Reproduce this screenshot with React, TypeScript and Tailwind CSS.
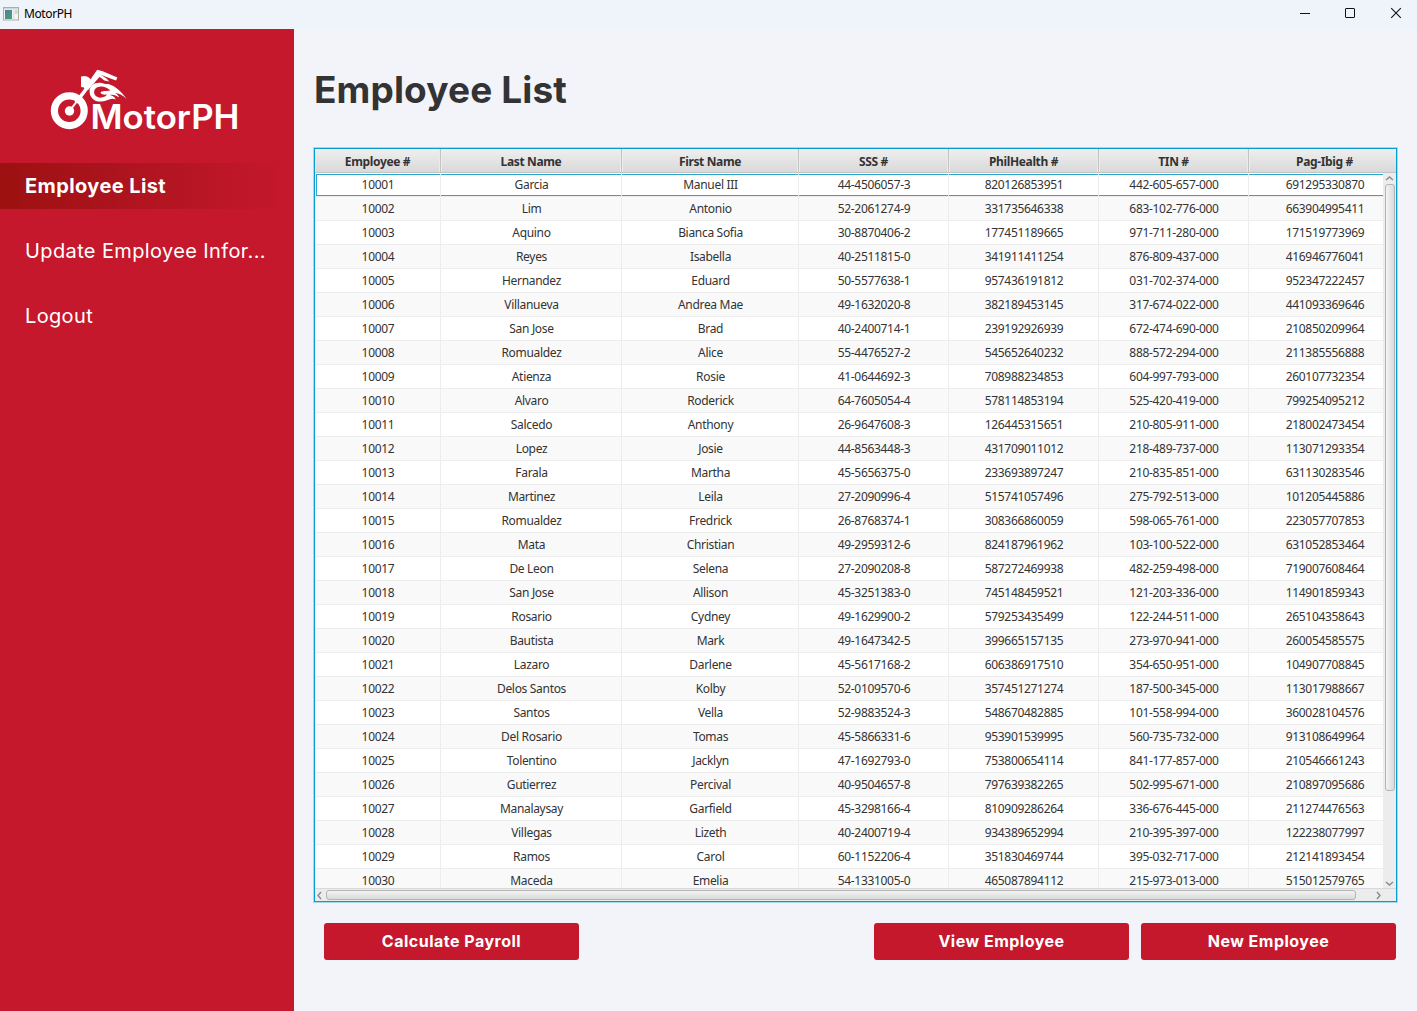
import React from "react";

type Row = [string, string, string, string, string, string, string];

const columns: { label: string; width: string }[] = [
  { label: "Employee #", width: "w-[126px]" },
  { label: "Last Name", width: "w-[181px]" },
  { label: "First Name", width: "w-[177px]" },
  { label: "SSS #", width: "w-[150px]" },
  { label: "PhilHealth #", width: "w-[150px]" },
  { label: "TIN #", width: "w-[150px]" },
  { label: "Pag-Ibig #", width: "w-[152px]" },
];

const rows: Row[] = [
  ["10001", "Garcia", "Manuel III", "44-4506057-3", "820126853951", "442-605-657-000", "691295330870"],
  ["10002", "Lim", "Antonio", "52-2061274-9", "331735646338", "683-102-776-000", "663904995411"],
  ["10003", "Aquino", "Bianca Sofia", "30-8870406-2", "177451189665", "971-711-280-000", "171519773969"],
  ["10004", "Reyes", "Isabella", "40-2511815-0", "341911411254", "876-809-437-000", "416946776041"],
  ["10005", "Hernandez", "Eduard", "50-5577638-1", "957436191812", "031-702-374-000", "952347222457"],
  ["10006", "Villanueva", "Andrea Mae", "49-1632020-8", "382189453145", "317-674-022-000", "441093369646"],
  ["10007", "San Jose", "Brad", "40-2400714-1", "239192926939", "672-474-690-000", "210850209964"],
  ["10008", "Romualdez", "Alice", "55-4476527-2", "545652640232", "888-572-294-000", "211385556888"],
  ["10009", "Atienza", "Rosie", "41-0644692-3", "708988234853", "604-997-793-000", "260107732354"],
  ["10010", "Alvaro", "Roderick", "64-7605054-4", "578114853194", "525-420-419-000", "799254095212"],
  ["10011", "Salcedo", "Anthony", "26-9647608-3", "126445315651", "210-805-911-000", "218002473454"],
  ["10012", "Lopez", "Josie", "44-8563448-3", "431709011012", "218-489-737-000", "113071293354"],
  ["10013", "Farala", "Martha", "45-5656375-0", "233693897247", "210-835-851-000", "631130283546"],
  ["10014", "Martinez", "Leila", "27-2090996-4", "515741057496", "275-792-513-000", "101205445886"],
  ["10015", "Romualdez", "Fredrick", "26-8768374-1", "308366860059", "598-065-761-000", "223057707853"],
  ["10016", "Mata", "Christian", "49-2959312-6", "824187961962", "103-100-522-000", "631052853464"],
  ["10017", "De Leon", "Selena", "27-2090208-8", "587272469938", "482-259-498-000", "719007608464"],
  ["10018", "San Jose", "Allison", "45-3251383-0", "745148459521", "121-203-336-000", "114901859343"],
  ["10019", "Rosario", "Cydney", "49-1629900-2", "579253435499", "122-244-511-000", "265104358643"],
  ["10020", "Bautista", "Mark", "49-1647342-5", "399665157135", "273-970-941-000", "260054585575"],
  ["10021", "Lazaro", "Darlene", "45-5617168-2", "606386917510", "354-650-951-000", "104907708845"],
  ["10022", "Delos Santos", "Kolby", "52-0109570-6", "357451271274", "187-500-345-000", "113017988667"],
  ["10023", "Santos", "Vella", "52-9883524-3", "548670482885", "101-558-994-000", "360028104576"],
  ["10024", "Del Rosario", "Tomas", "45-5866331-6", "953901539995", "560-735-732-000", "913108649964"],
  ["10025", "Tolentino", "Jacklyn", "47-1692793-0", "753800654114", "841-177-857-000", "210546661243"],
  ["10026", "Gutierrez", "Percival", "40-9504657-8", "797639382265", "502-995-671-000", "210897095686"],
  ["10027", "Manalaysay", "Garfield", "45-3298166-4", "810909286264", "336-676-445-000", "211274476563"],
  ["10028", "Villegas", "Lizeth", "40-2400719-4", "934389652994", "210-395-397-000", "122238077997"],
  ["10029", "Ramos", "Carol", "60-1152206-4", "351830469744", "395-032-717-000", "212141893454"],
  ["10030", "Maceda", "Emelia", "54-1331005-0", "465087894112", "215-973-013-000", "515012579765"],
];

function TitleBar() {
  return (
    <header className="flex h-[29px] shrink-0 items-center bg-[#eff3fa] pb-[2px] pl-[3px] text-black">
      <svg width="16" height="14" viewBox="0 0 16 14" className="shrink-0">
        <defs>
          <linearGradient id="pane" x1="0" y1="0" x2="1" y2="1">
            <stop offset="0" stopColor="#4d7fa8" />
            <stop offset="1" stopColor="#46a26b" />
          </linearGradient>
        </defs>
        <rect x="0.5" y="0.5" width="15" height="12.5" fill="#f4f4f4" stroke="#a9adb0" />
        <rect x="1" y="1" width="14" height="1.5" fill="#d3d6d8" />
        <rect x="2" y="3" width="7" height="9" fill="url(#pane)" />
        <rect x="10" y="3" width="1.5" height="9" fill="#dfe3e6" />
        <rect x="12" y="3" width="2.5" height="4" fill="#c0dccb" />
      </svg>
      <span className="ml-[5px] text-[12px] leading-none tracking-[-0.4px]">MotorPH</span>
      <svg width="137" height="27" viewBox="0 0 137 27" className="ml-auto" fill="none" stroke="#111" strokeWidth="1">
        <path d="M20 13.5h10" />
        <rect x="65.5" y="8.5" width="9" height="9" rx="0.5" />
        <path d="M111.2 8.2l9.6 9.6M120.8 8.2l-9.6 9.6" strokeWidth="1.1" />
      </svg>
    </header>
  );
}

function Logo() {
  return (
    <svg width="210" height="80" viewBox="0 0 210 80" className="ml-10 mt-[31px] shrink-0" fill="#fff">
      <circle cx="29.3" cy="50.7" r="14.9" fill="none" stroke="#fff" strokeWidth="7.2" />
      <circle cx="29.5" cy="51" r="4.7" />
      <path d="M29.5 51L37.5 40.5" stroke="#fff" strokeWidth="2" />
      <path d="M36 42.5L50 24" stroke="#fff" strokeWidth="3.6" />
      <path d="M41 16.6Q46 14.9 48.8 17.6L50.6 19.2L57.2 9.8L62.7 11.2L77.4 17.4L76 20.6L61.2 15L48.5 29.5L45 31L44 27.6L41 27Z" />
      <path d="M60 14.2L66.5 18.6L69.3 21.6L64.5 20.4L59 16.5Z" />
      <path
        d="M49.6 31.5C49.4 25.5 54.8 21.9 61.5 22.9C64.6 23.9 66.2 24 68.5 24C75 26 81 31 86.5 38.8C82.5 35 78.5 33.2 75.3 33C77.3 34.4 78.5 35.8 79.2 37.4C75 34.7 72.3 34.4 70 34.9C73.2 35.6 75 37.2 75.8 39.4C70.5 37.2 66.5 41.6 60.5 41.6C54 41.6 49.8 37.6 49.6 31.5ZM54.2 31C53.4 35 57 38 61.4 37.6C64.4 37.2 66.2 36 67 34.6C64 35 61 34.5 60.6 32.8C60.3 30.8 64.6 31.3 70.5 30.5C67.3 27.8 64 26.5 60.8 26.6C57.2 26.7 54.7 28.5 54.2 31Z"
        fillRule="evenodd"
      />
      <text x="50.5" y="68.7" fontFamily="Inter, sans-serif" fontWeight="600" fontSize="33.4" textLength="149" lengthAdjust="spacingAndGlyphs">
        MotorPH
      </text>
    </svg>
  );
}

function Sidebar() {
  return (
    <aside className="flex w-[294px] shrink-0 flex-col bg-[#c6182d] font-['Inter',sans-serif] text-white">
      <Logo />
      <nav className="mt-[23px] flex flex-col gap-[19px] text-[20px]">
        <a className="flex h-[46px] items-center bg-linear-to-r from-[#9c1111] to-[#c6182d] pl-[25px] font-bold tracking-[0.4px]">Employee List</a>
        <a className="flex h-[46px] items-center whitespace-nowrap pl-[25px] font-normal tracking-[0.38px]">Update Employee Infor...</a>
        <a className="flex h-[46px] items-center pl-[25px] font-normal tracking-[0.35px]">Logout</a>
      </nav>
    </aside>
  );
}

function Chevron({ d, className }: { d: string; className: string }) {
  return (
    <svg width="9" height="9" viewBox="0 0 9 9" fill="none" stroke="#8a8a8a" strokeWidth="1.4" className={className}>
      <path d={d} />
    </svg>
  );
}

function EmployeeTable() {
  return (
    <div className="h-[754px] w-[1083px] border border-[#039ed3] bg-white shadow-[0_0_0_1px_#a4d9eb]">
      <div className="flex h-[752px] flex-col overflow-hidden text-[12px] text-[#333]">
        <div className="flex h-6 shrink-0 overflow-hidden border-b border-[#c3c3c3] bg-linear-to-b from-[#efefef] to-[#d9d9d9] shadow-[inset_0_1px_0_#f8f8f8]">
          {columns.map((c) => (
            <div
              key={c.label}
              className={`${c.width} flex shrink-0 items-center justify-center border-r border-[#c3c3c3] pt-[3px] font-bold tracking-[-0.36px] shadow-[inset_-1px_0_0_#ebebeb,inset_1px_0_0_#ededed]`}
            >
              {c.label}
            </div>
          ))}
        </div>
        <div className="flex h-[715px] shrink-0">
          <div className="w-[1068px] overflow-hidden">
            {rows.map((row, r) => (
              <div key={row[0]} className={`relative flex h-6 ${r % 2 ? "bg-[#f9f9f9]" : "bg-white"}`}>
                {r === 0 && (
                  <div className="absolute left-px right-[-4px] top-px h-[22px] border border-[#2ba6d1]" />
                )}
                {row.map((cell, i) => (
                  <div
                    key={i}
                    className={`${columns[i].width} relative flex shrink-0 items-center justify-center border-b border-r border-[#ededed] pl-px pt-px tracking-[-0.31px]`}
                  >
                    {cell}
                  </div>
                ))}
              </div>
            ))}
          </div>
          <div className="flex w-[13px] flex-col items-center bg-[#ececec]">
            <Chevron d="M1 6L4.5 3L8 6" className="h-[11px] shrink-0" />
            <div className="h-[607px] w-[10px] rounded-[3px] border border-[#b4b4b4] bg-linear-to-r from-[#f4f4f4] to-[#dadada]" />
            <Chevron d="M1 3L4.5 6L8 3" className="mt-auto shrink-0" />
          </div>
        </div>
        <div className="flex h-[13px] shrink-0 items-center border-t border-[#d8d8d8] bg-[#ececec]">
          <Chevron d="M6 1L3 4.5L6 8" className="mr-[2px] shrink-0" />
          <div className="h-[10px] w-[1030px] rounded-[3px] border border-[#b4b4b4] bg-linear-to-b from-[#f4f4f4] to-[#dadada]" />
          <Chevron d="M3 1L6 4.5L3 8" className="ml-[18px] shrink-0" />
        </div>
      </div>
    </div>
  );
}

function ActionButton({ label }: { label: string }) {
  return (
    <button className="flex h-[37px] w-[255px] items-center justify-center rounded-[3px] bg-[#c6182d] pb-[2px] font-['Inter',sans-serif] text-[16px] font-bold tracking-[0.5px] text-white">
      {label}
    </button>
  );
}

export default function App() {
  return (
    <div className="flex h-[1011px] w-[1417px] flex-col overflow-hidden bg-[#f3f4f9] font-['Noto_Sans','Open_Sans',sans-serif]">
      <TitleBar />
      <div className="flex min-h-0 flex-1">
        <Sidebar />
        <main className="flex flex-1 flex-col pl-5">
          <h1 className="mt-[36px] h-[50px] font-['Inter',sans-serif] text-[37px] font-bold leading-[50px] tracking-[0.13px] text-[#333]">
            Employee List
          </h1>
          <div className="mt-[33px]">
            <EmployeeTable />
          </div>
          <div className="mt-[21px] flex pl-[10px]">
            <ActionButton label="Calculate Payroll" />
            <div className="ml-[295px] flex gap-3">
              <ActionButton label="View Employee" />
              <ActionButton label="New Employee" />
            </div>
          </div>
        </main>
      </div>
    </div>
  );
}
